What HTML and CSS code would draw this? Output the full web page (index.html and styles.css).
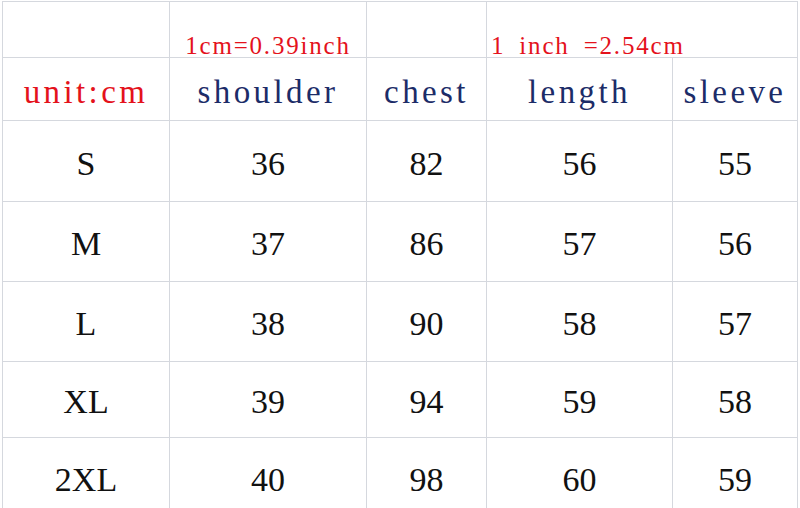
FILE: index.html
```html
<!DOCTYPE html>
<html>
<head>
<meta charset="utf-8">
<link rel="stylesheet" href="styles.css">
</head>
<body>
<div class="sheet">
  <div class="cell note"></div>
  <div class="cell note"><span class="red small">1cm=0.39inch</span></div>
  <div class="cell note"></div>
  <div class="cell note wide"><span class="red small">1 inch =2.54cm</span></div>

  <div class="cell head"><span class="red big">unit:cm</span></div>
  <div class="cell head"><span class="blue big">shoulder</span></div>
  <div class="cell head"><span class="blue big">chest</span></div>
  <div class="cell head"><span class="blue big">length</span></div>
  <div class="cell head"><span class="blue big">sleeve</span></div>

  <div class="cell val">S</div><div class="cell val">36</div><div class="cell val">82</div><div class="cell val">56</div><div class="cell val">55</div>
  <div class="cell val">M</div><div class="cell val">37</div><div class="cell val">86</div><div class="cell val">57</div><div class="cell val">56</div>
  <div class="cell val">L</div><div class="cell val">38</div><div class="cell val">90</div><div class="cell val">58</div><div class="cell val">57</div>
  <div class="cell val">XL</div><div class="cell val">39</div><div class="cell val">94</div><div class="cell val">59</div><div class="cell val">58</div>
  <div class="cell val">2XL</div><div class="cell val">40</div><div class="cell val">98</div><div class="cell val">60</div><div class="cell val">59</div>
</div>
</body>
</html>
```
FILE: styles.css
```css
html, body {
  margin: 0;
  padding: 0;
  background: #ffffff;
  overflow: hidden;
}
body {
  width: 800px;
  height: 508px;
  font-family: "Liberation Serif", "Times New Roman", serif;
}
.sheet {
  display: grid;
  grid-template-columns: 167px 197px 120px 186px 125px;
  grid-template-rows: 56px 63px 81px 80px 80px 76px 80px;
  margin: 1px 0 0 2px;
  width: max-content;
  border-left: 1px solid #d5d8de;
  border-top: 1px solid #d5d8de;
}
.cell {
  box-sizing: border-box;
  border-right: 1px solid #d5d8de;
  border-bottom: 1px solid #d5d8de;
  display: flex;
  justify-content: center;
  align-items: center;
  white-space: nowrap;
}
.note {
  align-items: flex-end;
}
.wide {
  grid-column: span 2;
  justify-content: flex-start;
  padding-left: 4px;
}
.head {
  padding-top: 6px;
}
.val {
  font-size: 34px;
  color: #111111;
  padding-top: 5px;
}
.red { color: #e4121c; }
.blue { color: #1c2c68; }
.small {
  font-size: 25px;
  letter-spacing: 1.8px;
  word-spacing: 6px;
  line-height: 22px;
}
.big {
  font-size: 33px;
  letter-spacing: 3.4px;
}
```
